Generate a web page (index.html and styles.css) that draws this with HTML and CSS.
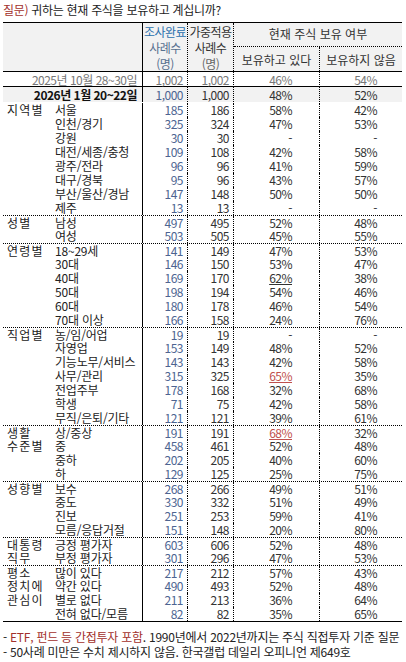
FILE: index.html
```html
<!DOCTYPE html>
<html lang="ko">
<head>
<meta charset="utf-8">
<title>현재 주식 보유 여부</title>
<link rel="stylesheet" href="styles.css">
</head>
<body>
<div class="page">
  <p class="title"><span class="q">질문)</span> 귀하는 현재 주식을 보유하고 계십니까?</p>
  <div class="tbl">
    <div class="head">
      <div class="h-lab"></div>
      <div class="h-n h-n1"><span class="c-blue">조사완료</span><br><span class="c-bgrey">사례수</span><br><span class="c-bgrey">(명)</span></div>
      <div class="h-n h-n2">가중적용<br>사례수<br><span class="c-grey">(명)</span></div>
      <div class="h-own">
        <div class="h-own-title">현재 주식 보유 여부</div>
        <div class="h-own-sub"><div class="h-s1">보유하고 있다</div><div class="h-s2">보유하지 않음</div></div>
      </div>
    </div>
    <div class="row prev"><div class="lab-span">2025년 10월 28~30일</div><div class="n1">1,002</div><div class="n2">1,002</div><div class="p1">46%</div><div class="p2">54%</div></div>
    <div class="row cur"><div class="lab-span">2026년 1월 20~22일</div><div class="n1">1,000</div><div class="n2">1,000</div><div class="p1">48%</div><div class="p2">52%</div></div>

    <div class="row grp"><div class="g">지역별</div><div class="s">서울</div><div class="n1">185</div><div class="n2">186</div><div class="p1">58%</div><div class="p2">42%</div></div>
    <div class="row"><div class="g"></div><div class="s">인천/경기</div><div class="n1">325</div><div class="n2">324</div><div class="p1">47%</div><div class="p2">53%</div></div>
    <div class="row"><div class="g"></div><div class="s">강원</div><div class="n1">30</div><div class="n2">30</div><div class="p1">-</div><div class="p2">-</div></div>
    <div class="row"><div class="g"></div><div class="s">대전/세종/충청</div><div class="n1">109</div><div class="n2">108</div><div class="p1">42%</div><div class="p2">58%</div></div>
    <div class="row"><div class="g"></div><div class="s">광주/전라</div><div class="n1">96</div><div class="n2">96</div><div class="p1">41%</div><div class="p2">59%</div></div>
    <div class="row"><div class="g"></div><div class="s">대구/경북</div><div class="n1">95</div><div class="n2">96</div><div class="p1">43%</div><div class="p2">57%</div></div>
    <div class="row"><div class="g"></div><div class="s">부산/울산/경남</div><div class="n1">147</div><div class="n2">148</div><div class="p1">50%</div><div class="p2">50%</div></div>
    <div class="row"><div class="g"></div><div class="s">제주</div><div class="n1">13</div><div class="n2">13</div><div class="p1">-</div><div class="p2">-</div></div>

    <div class="row sep"><div class="g">성별</div><div class="s">남성</div><div class="n1">497</div><div class="n2">495</div><div class="p1">52%</div><div class="p2">48%</div></div>
    <div class="row"><div class="g"></div><div class="s">여성</div><div class="n1">503</div><div class="n2">505</div><div class="p1">45%</div><div class="p2">55%</div></div>

    <div class="row sep"><div class="g">연령별</div><div class="s">18~29세</div><div class="n1">141</div><div class="n2">149</div><div class="p1">47%</div><div class="p2">53%</div></div>
    <div class="row"><div class="g"></div><div class="s">30대</div><div class="n1">146</div><div class="n2">150</div><div class="p1">53%</div><div class="p2">47%</div></div>
    <div class="row"><div class="g"></div><div class="s">40대</div><div class="n1">169</div><div class="n2">170</div><div class="p1"><span class="u">62%</span></div><div class="p2">38%</div></div>
    <div class="row"><div class="g"></div><div class="s">50대</div><div class="n1">198</div><div class="n2">194</div><div class="p1">54%</div><div class="p2">46%</div></div>
    <div class="row"><div class="g"></div><div class="s">60대</div><div class="n1">180</div><div class="n2">178</div><div class="p1">46%</div><div class="p2">54%</div></div>
    <div class="row"><div class="g"></div><div class="s">70대 이상</div><div class="n1">166</div><div class="n2">158</div><div class="p1">24%</div><div class="p2">76%</div></div>

    <div class="row sep"><div class="g">직업별</div><div class="s">농/임/어업</div><div class="n1">19</div><div class="n2">19</div><div class="p1">-</div><div class="p2">-</div></div>
    <div class="row"><div class="g"></div><div class="s">자영업</div><div class="n1">153</div><div class="n2">149</div><div class="p1">48%</div><div class="p2">52%</div></div>
    <div class="row"><div class="g"></div><div class="s">기능노무/서비스</div><div class="n1">143</div><div class="n2">143</div><div class="p1">42%</div><div class="p2">58%</div></div>
    <div class="row"><div class="g"></div><div class="s">사무/관리</div><div class="n1">315</div><div class="n2">325</div><div class="p1"><span class="u red">65%</span></div><div class="p2">35%</div></div>
    <div class="row"><div class="g"></div><div class="s">전업주부</div><div class="n1">178</div><div class="n2">168</div><div class="p1">32%</div><div class="p2">68%</div></div>
    <div class="row"><div class="g"></div><div class="s">학생</div><div class="n1">71</div><div class="n2">75</div><div class="p1">42%</div><div class="p2">58%</div></div>
    <div class="row"><div class="g"></div><div class="s">무직/은퇴/기타</div><div class="n1">121</div><div class="n2">121</div><div class="p1">39%</div><div class="p2">61%</div></div>

    <div class="row sep"><div class="g">생활</div><div class="s">상/중상</div><div class="n1">191</div><div class="n2">191</div><div class="p1"><span class="u red">68%</span></div><div class="p2">32%</div></div>
    <div class="row"><div class="g">수준별</div><div class="s">중</div><div class="n1">458</div><div class="n2">461</div><div class="p1">52%</div><div class="p2">48%</div></div>
    <div class="row"><div class="g"></div><div class="s">중하</div><div class="n1">202</div><div class="n2">205</div><div class="p1">40%</div><div class="p2">60%</div></div>
    <div class="row"><div class="g"></div><div class="s">하</div><div class="n1">129</div><div class="n2">125</div><div class="p1">25%</div><div class="p2">75%</div></div>

    <div class="row sep"><div class="g">성향별</div><div class="s">보수</div><div class="n1">268</div><div class="n2">266</div><div class="p1">49%</div><div class="p2">51%</div></div>
    <div class="row"><div class="g"></div><div class="s">중도</div><div class="n1">330</div><div class="n2">332</div><div class="p1">51%</div><div class="p2">49%</div></div>
    <div class="row"><div class="g"></div><div class="s">진보</div><div class="n1">251</div><div class="n2">253</div><div class="p1">59%</div><div class="p2">41%</div></div>
    <div class="row"><div class="g"></div><div class="s">모름/응답거절</div><div class="n1">151</div><div class="n2">148</div><div class="p1">20%</div><div class="p2">80%</div></div>

    <div class="row sep"><div class="g">대통령</div><div class="s">긍정 평가자</div><div class="n1">603</div><div class="n2">606</div><div class="p1">52%</div><div class="p2">48%</div></div>
    <div class="row"><div class="g">직무</div><div class="s">부정 평가자</div><div class="n1">301</div><div class="n2">296</div><div class="p1">47%</div><div class="p2">53%</div></div>

    <div class="row sep"><div class="g">평소</div><div class="s">많이 있다</div><div class="n1">217</div><div class="n2">212</div><div class="p1">57%</div><div class="p2">43%</div></div>
    <div class="row"><div class="g">정치에</div><div class="s">약간 있다</div><div class="n1">490</div><div class="n2">493</div><div class="p1">52%</div><div class="p2">48%</div></div>
    <div class="row"><div class="g">관심이</div><div class="s">별로 없다</div><div class="n1">211</div><div class="n2">213</div><div class="p1">36%</div><div class="p2">64%</div></div>
    <div class="row last"><div class="g"></div><div class="s">전혀 없다/모름</div><div class="n1">82</div><div class="n2">82</div><div class="p1">35%</div><div class="p2">65%</div></div>
  </div>
  <div class="notes">
    <p>- <span class="red-t">ETF, 펀드 등 간접투자 포함</span>. 1990년에서 2022년까지는 주식 직접투자 기준 질문</p>
    <p>- 50사례 미만은 수치 제시하지 않음. 한국갤럽 데일리 오피니언 제649호</p>
  </div>
</div>
</body>
</html>
```

FILE: styles.css
```css
html, body {
  margin: 0;
  padding: 0;
  background: #ffffff;
}

body {
  font-family: "Noto Sans CJK KR", "Noto Sans", sans-serif;
  font-size: 12px;
  color: #222222;
  letter-spacing: -0.5px;
}

.page {
  width: 406px;
}

.title {
  margin: 0;
  height: 22px;
  padding-left: 3px;
  line-height: 20px;
  font-size: 12px;
  letter-spacing: -0.3px;
  color: #222;
}

.title .q {
  color: #a2302b;
}

.tbl {
  margin-left: 3px;
  width: 399px;
  border-top: 1px solid #000;
  border-bottom: 1px solid #000;
}

/* header */
.head {
  display: grid;
  grid-template-columns: 140px 45px 46px 168px;
  height: 49px;
  box-sizing: border-box;
  background: #f2f2f2;
  border-bottom: 1px solid #000;
}

.h-lab {
  border-right: 1px solid #000;
}

.h-n {
  text-align: center;
  line-height: 16px;
  padding-top: 1px;
  border-right: 1px dotted #000;
  color: #333;
}

.c-blue { color: #2a70ad; }
.c-bgrey { color: #56708f; }
.c-grey { color: #666; }

.h-own {
  display: flex;
  flex-direction: column;
}

.h-own-title {
  height: 24px;
  box-sizing: border-box;
  border-bottom: 1px dotted #000;
  text-align: center;
  line-height: 22px;
  letter-spacing: 0;
  color: #333;
}

.h-own-sub {
  flex: 1;
  display: grid;
  grid-template-columns: 86px 82px;
}

.h-s1, .h-s2 {
  text-align: center;
  line-height: 26px;
  letter-spacing: 0;
  color: #333;
}

.h-s1 {
  border-right: 1px dotted #000;
}

/* rows */
.row {
  display: grid;
  grid-template-columns: 52px 88px 45px 46px 86px 82px;
  height: 14px;
  line-height: 14px;
  box-sizing: border-box;
}

.row > div {
  white-space: nowrap;
}

.row .s,
.row .lab-span {
  border-right: 1px solid #000;
}

.row .n1,
.row .n2,
.row .p1 {
  border-right: 1px dotted #000;
}

.g {
  padding-left: 4px;
  letter-spacing: 1.2px;
}

.s {
  letter-spacing: -0.2px;
}

.lab-span {
  grid-column: 1 / 3;
  text-align: right;
  padding-right: 5px;
}

.n1, .n2 {
  text-align: right;
  padding-right: 4px;
}

.n1 { color: #4d6491; }
.n2 { color: #333; }

.p1 {
  text-align: right;
  padding-right: 27px;
  color: #333;
}

.p2 {
  text-align: right;
  padding-right: 25px;
  color: #333;
}

.row.prev {
  height: 15px;
  line-height: 15px;
  border-bottom: 1px solid #000;
  color: #777;
}

.row.prev .n1,
.row.prev .n2,
.row.prev .p1,
.row.prev .p2 {
  color: #777;
}

.row.cur {
  height: 15px;
  line-height: 15px;
  background: #f2f2f2;
}

.row.cur .lab-span {
  font-weight: bold;
  color: #111;
}

.row.grp {
  height: 15px;
  padding-top: 1px;
}

.row.sep {
  border-top: 1px dotted #000;
}

.u {
  text-decoration: underline;
  text-underline-offset: 1px;
}

.u.red {
  color: #c0504d;
}

.notes {
  padding-top: 7px;
  padding-left: 3px;
}

.notes p {
  margin: 0;
  line-height: 15px;
  font-size: 12px;
  letter-spacing: -0.25px;
  color: #222;
}

.red-t {
  color: #a2302b;
}
```
